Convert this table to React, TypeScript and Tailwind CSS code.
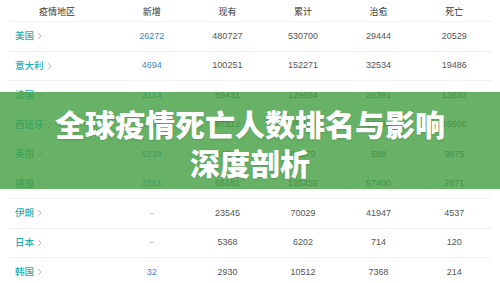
const rows = [
  { name: "美国", add: "26272", cur: "480727", total: "530700", cured: "29444", dead: "20529" },
  { name: "意大利", add: "4694", cur: "100251", total: "152271", cured: "32534", dead: "19486" },
  { name: "法国", add: "3114", cur: "89431", total: "129654", cured: "26391", dead: "13832" },
  { name: "西班牙", add: "5051", cur: "87312", total: "161852", cured: "57934", dead: "16606" },
  { name: "英国", add: "5234", cur: "74081", total: "84279", cured: "588", dead: "9875" },
  { name: "德国", add: "3281", cur: "65181", total: "125452", cured: "57400", dead: "2871" },
  { name: "伊朗", add: "-", cur: "23545", total: "70029", cured: "41947", dead: "4537" },
  { name: "日本", add: "-", cur: "5368", total: "6202", cured: "714", dead: "120" },
  { name: "韩国", add: "32", cur: "2930", total: "10512", cured: "7368", dead: "214" },
];

const headers = ["新增", "现有", "累计", "治愈", "死亡"];

function Chevron() {
  return (
    <svg width="5" height="8" viewBox="0 0 5 8" className="ml-[3px]">
      <path d="M1 0.8 L4 4 L1 7.2" fill="none" stroke="#a8b0b8" strokeWidth="0.9" />
    </svg>
  );
}

export default function App() {
  return (
    <div
      className="relative w-[500px] h-[283px] overflow-hidden bg-white"
      style={{ fontFamily: '"Liberation Sans", Arial, "Noto Sans CJK SC", sans-serif' }}
    >
      {/* table */}
      <div className="grid grid-cols-[106px_repeat(5,1fr)] h-[22px] items-center pt-[4px] text-[9px] text-[#333] border-b border-[#f2f2f2] mx-2">
        <div className="text-center -ml-2">疫情地区</div>
        {headers.map((h) => (
          <div key={h} className="text-center">{h}</div>
        ))}
      </div>
      {rows.map((r) => (
        <div
          key={r.name}
          className="grid grid-cols-[106px_repeat(5,1fr)] h-[29.5px] items-center text-[9px] text-[#555] border-b border-[#f2f2f2] mx-2"
        >
          <div className="flex items-center pl-[7px] text-[#1eafb4] text-[9.5px] font-medium">
            {r.name}
            <Chevron />
          </div>
          <div className={r.add === "-" ? "text-center text-[#888]" : "text-center text-[#3f7fcf]"}>{r.add}</div>
          <div className="text-center">{r.cur}</div>
          <div className="text-center">{r.total}</div>
          <div className="text-center">{r.cured}</div>
          <div className="text-center">{r.dead}</div>
        </div>
      ))}

      {/* title banner */}
      <div className="absolute left-0 right-0 top-[92px] h-[97px] bg-[rgba(66,159,66,0.8)] flex items-center justify-center">
        <h1
          className="text-white text-[30px] font-black leading-[39px] text-center mt-[4px] [text-shadow:0_1px_2px_rgba(0,0,0,0.15)]"
          style={{ fontFamily: '"Noto Sans CJK SC", "Noto Sans", sans-serif' }}
        >
          全球疫情死亡人数排名与影响
          <br />
          深度剖析
        </h1>
      </div>
    </div>
  );
}
